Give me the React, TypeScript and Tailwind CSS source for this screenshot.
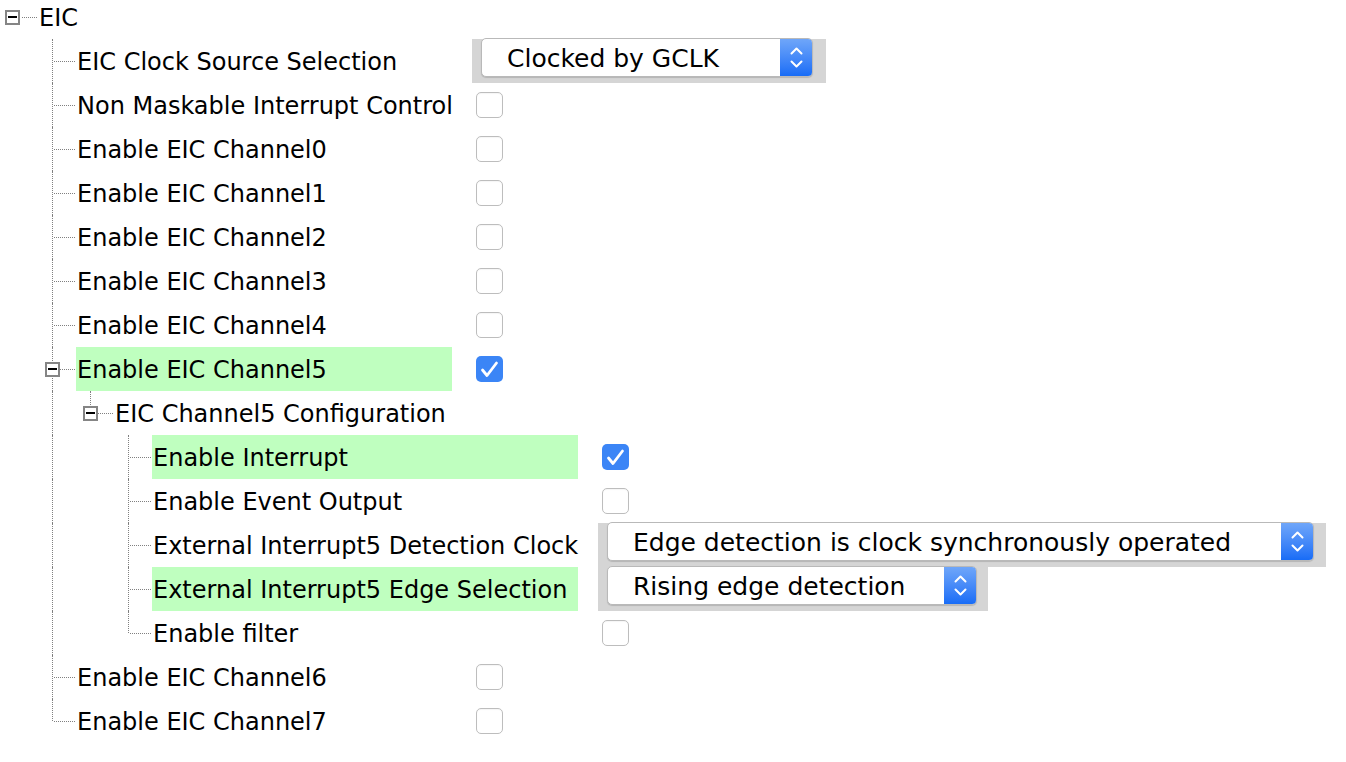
import React from 'react';

type Value =
  | { type: 'check'; checked?: boolean }
  | { type: 'select'; text: string; width: number; outer: number }
  | { type: 'none' };

interface Row {
  level: number;
  label: string;
  guides: boolean[]; // ancestor vertical lines that keep going
  last?: boolean;
  expander?: boolean;
  green?: boolean;
  labelWidth?: number;
  value: Value;
}

const L1 = 376;
const L3 = 426;

const rows: Row[] = [
  { level: 1, label: 'EIC Clock Source Selection', guides: [], labelWidth: L1, value: { type: 'select', text: 'Clocked by GCLK', width: 332, outer: 354 } },
  { level: 1, label: 'Non Maskable Interrupt Control', guides: [], labelWidth: L1, value: { type: 'check' } },
  { level: 1, label: 'Enable EIC Channel0', guides: [], labelWidth: L1, value: { type: 'check' } },
  { level: 1, label: 'Enable EIC Channel1', guides: [], labelWidth: L1, value: { type: 'check' } },
  { level: 1, label: 'Enable EIC Channel2', guides: [], labelWidth: L1, value: { type: 'check' } },
  { level: 1, label: 'Enable EIC Channel3', guides: [], labelWidth: L1, value: { type: 'check' } },
  { level: 1, label: 'Enable EIC Channel4', guides: [], labelWidth: L1, value: { type: 'check' } },
  { level: 1, label: 'Enable EIC Channel5', guides: [], labelWidth: L1, expander: true, green: true, value: { type: 'check', checked: true } },
  { level: 2, label: 'EIC Channel5 Configuration', guides: [true], last: true, expander: true, value: { type: 'none' } },
  { level: 3, label: 'Enable Interrupt', guides: [true, false], labelWidth: L3, green: true, value: { type: 'check', checked: true } },
  { level: 3, label: 'Enable Event Output', guides: [true, false], labelWidth: L3, value: { type: 'check' } },
  { level: 3, label: 'External Interrupt5 Detection Clock', guides: [true, false], labelWidth: L3, value: { type: 'select', text: 'Edge detection is clock synchronously operated', width: 707, outer: 728 } },
  { level: 3, label: 'External Interrupt5 Edge Selection', guides: [true, false], labelWidth: L3, green: true, value: { type: 'select', text: 'Rising edge detection', width: 370, outer: 390 } },
  { level: 3, label: 'Enable filter', guides: [true, false], labelWidth: L3, last: true, value: { type: 'check' } },
  { level: 1, label: 'Enable EIC Channel6', guides: [], labelWidth: L1, value: { type: 'check' } },
  { level: 1, label: 'Enable EIC Channel7', guides: [], labelWidth: L1, last: true, value: { type: 'check' } },
];

function ExpandBox() {
  return (
    <div className="relative z-10 flex h-[15px] w-[15px] shrink-0 items-center justify-center border-2 border-[#858585] bg-white">
      <div className="h-[2px] w-[9px] shrink-0 bg-black" />
    </div>
  );
}

function Checkbox({ checked }: { checked?: boolean }) {
  if (checked) {
    return (
      <div className="flex h-[26px] w-[27px] items-center justify-center rounded-[5px] bg-[#3b85f6]">
        <svg width="27" height="26" viewBox="0 0 27 26" fill="none">
          <path d="M6.5 14 L11 19.5 L20.5 7" stroke="white" strokeWidth="2.8" strokeLinecap="round" strokeLinejoin="round" />
        </svg>
      </div>
    );
  }
  return <div className="h-[26px] w-[27px] rounded-[5px] border border-[#bdbdbd] bg-white shadow-[inset_0_1px_1px_rgba(0,0,0,0.04)]" />;
}

function Select({ text, width, outer }: { text: string; width: number; outer: number }) {
  return (
    <div className="flex h-full items-start bg-[#d5d5d5] pl-[9px] pt-0" style={{ width: outer }}>
      <div
        className="-mt-[1px] flex h-[39px] items-stretch overflow-hidden rounded-[5px] border border-[#b9b9b9] bg-white shadow-[0_1px_1px_rgba(0,0,0,0.15)]"
        style={{ width }}
      >
        <div className="flex flex-1 items-center whitespace-nowrap pl-[25px] pt-[3px] text-[25px] text-black">{text}</div>
        <div className="flex w-[32px] flex-col items-center justify-center gap-[5px] bg-gradient-to-b from-[#6fa6f9] to-[#176cf6]">
          <svg width="13" height="8" viewBox="0 0 13 8" fill="none">
            <path d="M1.5 6.5 L6.5 1.5 L11.5 6.5" stroke="white" strokeWidth="2" strokeLinecap="round" strokeLinejoin="round" />
          </svg>
          <svg width="13" height="8" viewBox="0 0 13 8" fill="none">
            <path d="M1.5 1.5 L6.5 6.5 L11.5 1.5" stroke="white" strokeWidth="2" strokeLinecap="round" strokeLinejoin="round" />
          </svg>
        </div>
      </div>
    </div>
  );
}

function Connector({ last, expander }: { last?: boolean; expander?: boolean }) {
  return (
    <div className="flex h-full w-[38px] shrink-0">
      <div className="flex w-[15px] shrink-0 flex-col items-end">
        <div className={`w-[1px] border-l border-dotted border-[#808080] ${last ? 'h-1/2' : 'h-full'}`} />
      </div>
      <div className="flex flex-1 items-center">
        <div className="ml-[1px] mr-[1px] flex-1 border-t border-dotted border-[#808080]" />
      </div>
      {expander && (
        <div className="absolute flex h-[44px] w-[38px] items-center">
          <div className="ml-[7px] shrink-0">
            <ExpandBox />
          </div>
        </div>
      )}
    </div>
  );
}

function Guide({ on }: { on: boolean }) {
  return (
    <div className="flex h-full w-[38px] shrink-0">
      <div className="flex w-[15px] shrink-0 flex-col items-end">
        {on && <div className="h-full w-[1px] border-l border-dotted border-[#808080]" />}
      </div>
    </div>
  );
}

function TreeRow({ row }: { row: Row }) {
  return (
    <div className="flex h-[44px] items-stretch">
      <div className="w-[38px] shrink-0" />
      {row.guides.map((g, i) => (
        <Guide key={i} on={g} />
      ))}
      <div className="relative flex">
        <Connector last={row.last} expander={row.expander} />
      </div>
      <div
        className={`flex shrink-0 items-center pl-[1px] pt-[2px] ${row.green ? 'bg-[#bfffbf]' : ''}`}
        style={row.labelWidth ? { width: row.labelWidth } : undefined}
      >
        <span className="whitespace-nowrap">{row.label}</span>
      </div>
      {row.value.type !== 'none' && (
        <div className="ml-[20px] flex h-full items-center">
          {row.value.type === 'check' ? (
            <div className="pl-[4px]">
              <Checkbox checked={row.value.checked} />
            </div>
          ) : (
            <Select text={row.value.text} width={row.value.width} outer={row.value.outer} />
          )}
        </div>
      )}
    </div>
  );
}

export default function App() {
  return (
    <div
      className="h-[762px] w-[1346px] overflow-hidden bg-white text-[24px] text-black"
      style={{ fontFamily: '"DejaVu Sans", Verdana, sans-serif' }}
    >
      <div className="-mt-[5px]">
        {/* root node */}
        <div className="flex h-[44px] items-center">
          <div className="flex w-[38px] shrink-0 items-center">
            <div className="ml-[5px] shrink-0">
              <ExpandBox />
            </div>
            <div className="ml-[2px] mr-[1px] flex-1 border-t border-dotted border-[#808080]" />
          </div>
          <span className="pl-[1px] pt-[2px]">EIC</span>
        </div>
        {rows.map((r, i) => (
          <TreeRow key={i} row={r} />
        ))}
      </div>
    </div>
  );
}
